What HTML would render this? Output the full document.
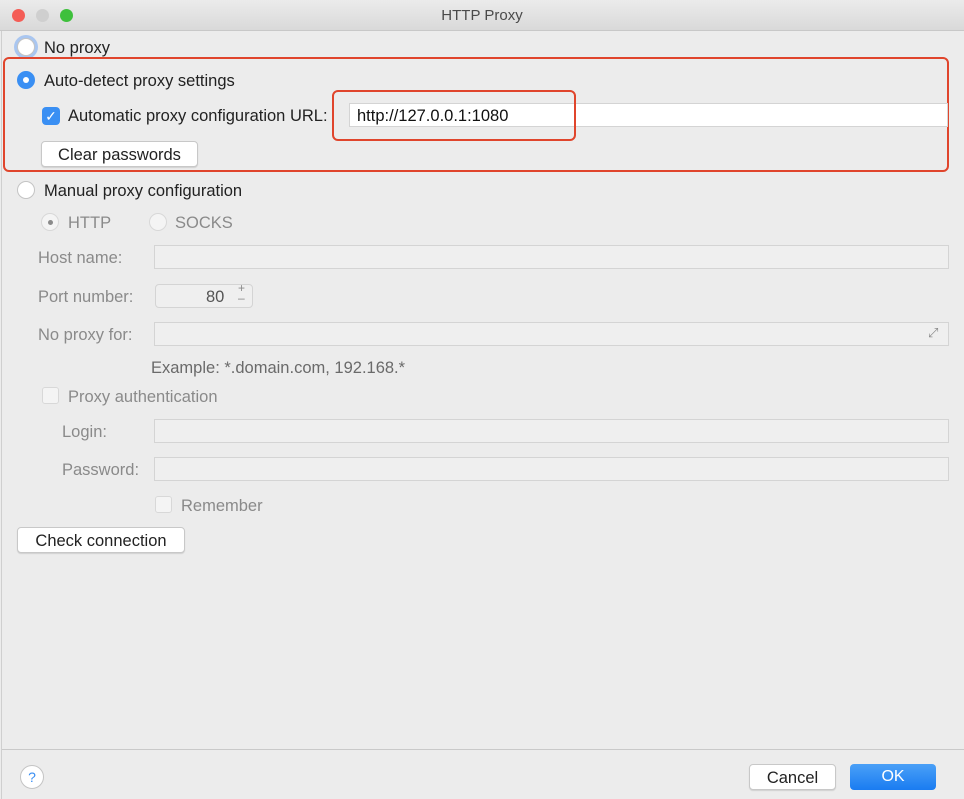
<!DOCTYPE html>
<html><head><style>
body{margin:0;width:964px;height:799px;background:#ececec;font-family:"Liberation Sans",sans-serif;font-size:16.5px;color:#222;position:relative;overflow:hidden}
.a{position:absolute;white-space:nowrap}
.dis{color:#8a8a8a}
.radio{position:absolute;width:18px;height:18px;border-radius:50%;background:#fff;border:1px solid #c4c4c4;box-sizing:border-box}
.field{position:absolute;background:#efefef;border:1px solid #d4d4d4;box-sizing:border-box;height:24px}
.btn{position:absolute;background:#fff;border:1px solid #c8c8c8;border-radius:4px;box-sizing:border-box;text-align:center;box-shadow:0 1px 1px rgba(0,0,0,.12)}
</style></head><body>
<div class="a" style="left:0;top:0;width:964px;height:30px;background:linear-gradient(#ebebeb,#d9d9d9);border-bottom:1px solid #c8c8c8"></div>
<div class="a" style="left:12px;top:9px;width:13px;height:13px;border-radius:50%;background:#f45d56"></div>
<div class="a" style="left:36px;top:9px;width:13px;height:13px;border-radius:50%;background:#cfcfcf"></div>
<div class="a" style="left:60px;top:9px;width:13px;height:13px;border-radius:50%;background:#3ec03c"></div>
<div class="a" style="left:0;width:964px;top:7px;text-align:center;color:#4a4a4a;font-size:15px">HTTP Proxy</div>
<div class="a" style="left:1px;top:31px;width:1px;height:768px;background:#cfcfcf"></div>

<div class="radio" style="left:17px;top:38px;box-shadow:0 0 0 3px #a9c6f0"></div>
<div class="a" style="left:44px;top:39px">No proxy</div>

<div class="a" style="left:3px;top:57px;width:946px;height:115px;border:2px solid #e0452c;border-radius:6px;box-sizing:border-box"></div>
<div class="radio" style="left:17px;top:71px;background:#3a8ff3;border-color:#3a8ff3"><div style="position:absolute;left:5px;top:5px;width:6px;height:6px;border-radius:50%;background:#fff"></div></div>
<div class="a" style="left:44px;top:72px">Auto-detect proxy settings</div>
<div class="a" style="left:42px;top:107px;width:18px;height:18px;border-radius:4px;background:#3a8ff3;color:#fff;font-size:14px;line-height:18px;text-align:center">✓</div>
<div class="a" style="left:68px;top:107px">Automatic proxy configuration URL:</div>
<div class="a" style="left:349px;top:103px;width:599px;height:24px;background:#fff;border:1px solid #d4d4d4;box-sizing:border-box"></div>
<div class="a" style="left:357px;top:107px;color:#111">http://127.0.0.1:1080</div>
<div class="a" style="left:332px;top:90px;width:244px;height:51px;border:2px solid #e0452c;border-radius:6px;box-sizing:border-box"></div>
<div class="btn" style="left:41px;top:141px;width:157px;height:26px;line-height:26px">Clear passwords</div>

<div class="radio" style="left:17px;top:181px"></div>
<div class="a" style="left:44px;top:182px">Manual proxy configuration</div>

<div class="radio" style="left:41px;top:213px;background:#f4f4f4;border-color:#d8d8d8"><div style="position:absolute;left:6px;top:6px;width:5px;height:5px;border-radius:50%;background:#8a8a8a"></div></div>
<div class="a dis" style="left:68px;top:214px">HTTP</div>
<div class="radio" style="left:149px;top:213px;background:#f4f4f4;border-color:#d8d8d8"></div>
<div class="a dis" style="left:175px;top:214px">SOCKS</div>

<div class="a dis" style="left:38px;top:249px">Host name:</div>
<div class="field" style="left:154px;top:245px;width:795px"></div>
<div class="a dis" style="left:38px;top:288px">Port number:</div>
<div class="field" style="left:155px;top:284px;width:98px;border-radius:4px"></div>
<div class="a" style="left:206px;top:288px;color:#555">80</div>
<div class="a dis" style="left:238px;top:283px;font-size:12px;line-height:10px">+<br>–</div>
<div class="a dis" style="left:38px;top:326px">No proxy for:</div>
<div class="field" style="left:154px;top:322px;width:795px"></div>
<div class="a dis" style="left:928px;top:325px;font-size:13px">⤢</div>
<div class="a" style="left:151px;top:359px;color:#6a6a6a">Example: *.domain.com, 192.168.*</div>

<div class="a" style="left:42px;top:387px;width:17px;height:17px;border-radius:3px;background:#f4f4f4;border:1px solid #d8d8d8;box-sizing:border-box"></div>
<div class="a dis" style="left:68px;top:388px">Proxy authentication</div>
<div class="a dis" style="left:62px;top:423px">Login:</div>
<div class="field" style="left:154px;top:419px;width:795px"></div>
<div class="a dis" style="left:62px;top:461px">Password:</div>
<div class="field" style="left:154px;top:457px;width:795px"></div>
<div class="a" style="left:155px;top:496px;width:17px;height:17px;border-radius:3px;background:#f4f4f4;border:1px solid #d8d8d8;box-sizing:border-box"></div>
<div class="a dis" style="left:181px;top:497px">Remember</div>

<div class="btn" style="left:17px;top:527px;width:168px;height:26px;line-height:26px">Check connection</div>

<div class="a" style="left:2px;top:749px;width:962px;height:1px;background:#c9c9c9"></div>
<div class="a" style="left:20px;top:765px;width:24px;height:24px;border-radius:50%;background:#fff;border:1px solid #c4c4c4;box-sizing:border-box;text-align:center;line-height:22px;color:#3a8ff3;font-size:14px">?</div>
<div class="btn" style="left:749px;top:764px;width:87px;height:26px;line-height:26px">Cancel</div>
<div class="a" style="left:850px;top:764px;width:86px;height:26px;border-radius:4px;background:linear-gradient(#4aa0f7,#1a7cf1);color:#fff;text-align:center;line-height:26px;font-size:16px">OK</div>
</body></html>
